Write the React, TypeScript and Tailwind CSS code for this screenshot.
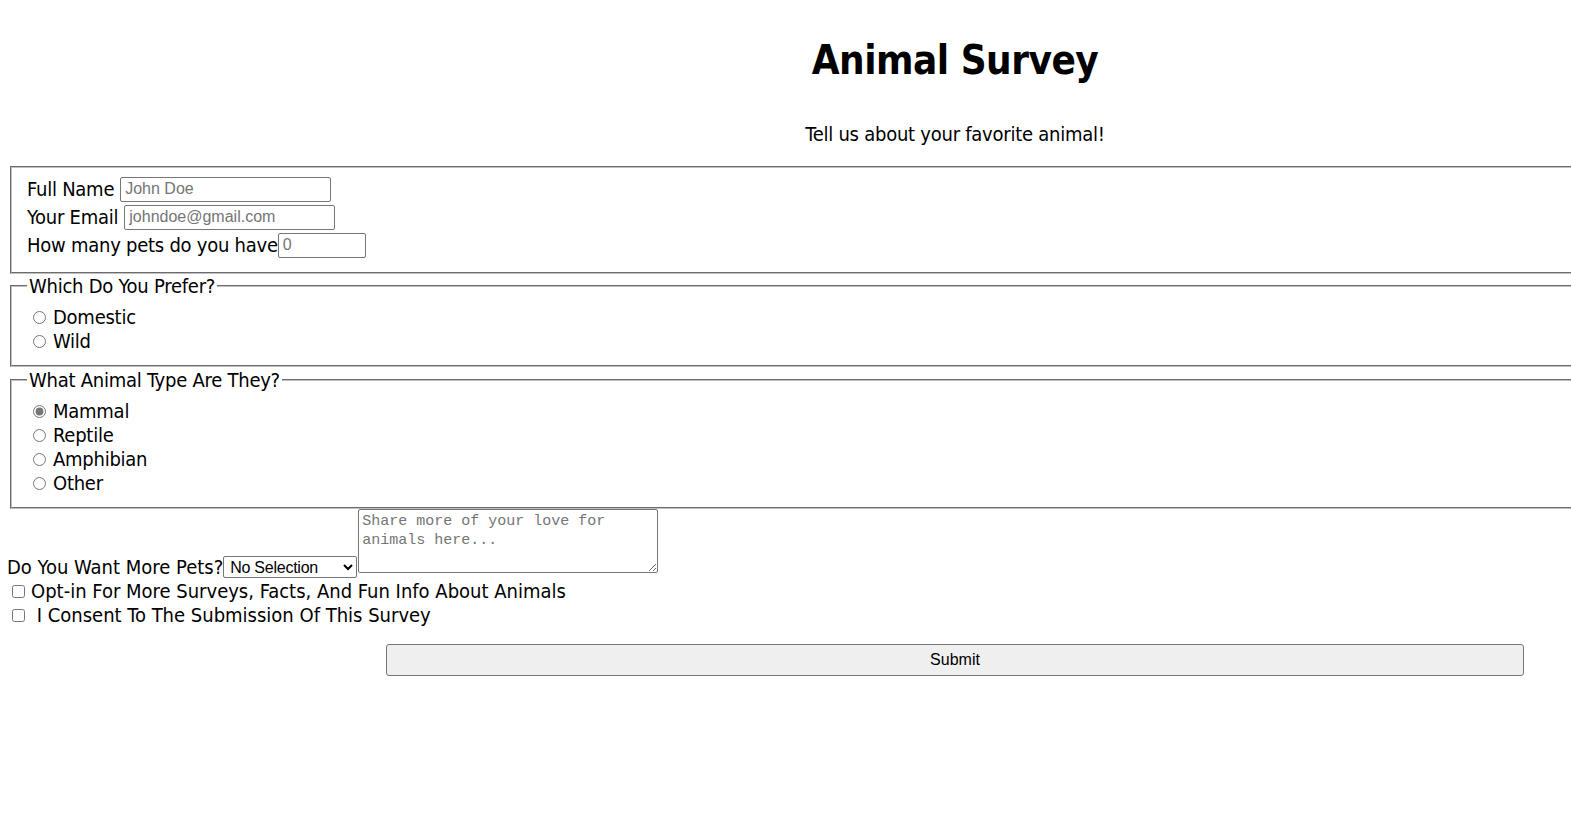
import React from 'react';

const label = "font-['DejaVu_Sans_Condensed','DejaVu_Sans',sans-serif] text-[20px] text-black tracking-[-0.25px]";
const narrow = "font-['DejaVu_Sans_Condensed','DejaVu_Sans',sans-serif] text-[20px] text-black tracking-[0px]";
const field = "mx-[2px] border-2 [border-style:groove] border-[#c0c0c0] pt-[7px] px-[15px]";
const input = "h-[25px] border border-[#767676] rounded-[2px] px-[4px] font-['Liberation_Sans',Arial,sans-serif] text-[16px] tracking-normal placeholder:text-[#757575] bg-white";

const RadioRow: React.FC<{ name: string; text: string; checked?: boolean }> = ({ name, text, checked }) => (
  <label className="flex items-center h-[24px]">
    <input
      type="radio"
      name={name}
      defaultChecked={checked}
      className="w-[13px] h-[13px] ml-[6px] mr-[7px] mt-[1px] accent-[#767676]"
    />
    <span>{text}</span>
  </label>
);

export default function App() {
  return (
    <div className="w-[1910px] px-2 bg-white min-h-[835px]">
      <h1 className={"text-center text-[40px] leading-[50px] font-bold pt-[35px] font-['DejaVu_Sans_Condensed','DejaVu_Sans',sans-serif] tracking-[-0.5px]"}>
        Animal Survey
      </h1>
      <p className={label + " text-center leading-[24px] mt-[37px]"}>Tell us about your favorite animal!</p>

      <form className={label + " mt-[20px]"}>
        <fieldset className={field + " pb-[13px]"}>
          <div className="flex items-center h-[28px]">
            <span className="mr-[6px]">Full Name</span>
            <input type="text" placeholder="John Doe" className={input + " w-[211px]"} />
          </div>
          <div className="flex items-center h-[28px]">
            <span className="mr-[6px]">Your Email</span>
            <input type="email" placeholder="johndoe@gmail.com" className={input + " w-[211px]"} />
          </div>
          <div className="flex items-center h-[28px]">
            <span>How many pets do you have</span>
            <input type="number" placeholder="0" className={input + " w-[88px]"} />
          </div>
        </fieldset>

        <fieldset className={field + " pb-[12px]"}>
          <legend className="px-[2px] leading-[24px]">Which Do You Prefer?</legend>
          <RadioRow name="prefer" text="Domestic" />
          <RadioRow name="prefer" text="Wild" />
        </fieldset>

        <fieldset className={field + " mt-[1px] pb-[12px]"}>
          <legend className="px-[2px] leading-[24px]">What Animal Type Are They?</legend>
          <RadioRow name="type" text="Mammal" checked />
          <RadioRow name="type" text="Reptile" />
          <RadioRow name="type" text="Amphibian" />
          <RadioRow name="type" text="Other" />
        </fieldset>

        <div className="flex items-end">
          <span className={narrow + " leading-[24px] -ml-[1px]"}>Do You Want More Pets?</span>
          <select className="w-[134px] h-[22px] border border-[#767676] rounded-[2px] font-['Liberation_Sans',Arial,sans-serif] text-[16px] bg-white pl-[2px] mb-[1px]">
            <option>No Selection</option>
            <option>Yes</option>
            <option>No</option>
          </select>
          <textarea
            placeholder="Share more of your love for animals here..."
            className="ml-[1px] mb-[6px] w-[300px] h-[64px] border border-[#767676] rounded-[2px] px-[3px] py-[2px] font-['Liberation_Mono',monospace] text-[15px] leading-[19px] tracking-normal placeholder:text-[#757575]"
          />
        </div>

        <label className={narrow + " flex items-center h-[24px]"}>
          <input type="checkbox" className="w-[13px] h-[13px] ml-[4px] mr-[6px] mt-[1px]" />
          <span>Opt-in For More Surveys, Facts, And Fun Info About Animals</span>
        </label>
        <label className={narrow + " flex items-center h-[24px]"}>
          <input type="checkbox" className="w-[13px] h-[13px] ml-[4px] mr-[6px] mt-[1px]" />
          <span>&nbsp;I Consent To The Submission Of This Survey</span>
        </label>

        <div className="flex justify-center mt-[17px]">
          <button
            type="submit"
            className="w-[1138px] h-[32px] bg-[#efefef] border border-[#767676] rounded-[3px] font-['Liberation_Sans',Arial,sans-serif] text-[16px] tracking-normal text-black"
          >
            Submit
          </button>
        </div>
      </form>
    </div>
  );
}
